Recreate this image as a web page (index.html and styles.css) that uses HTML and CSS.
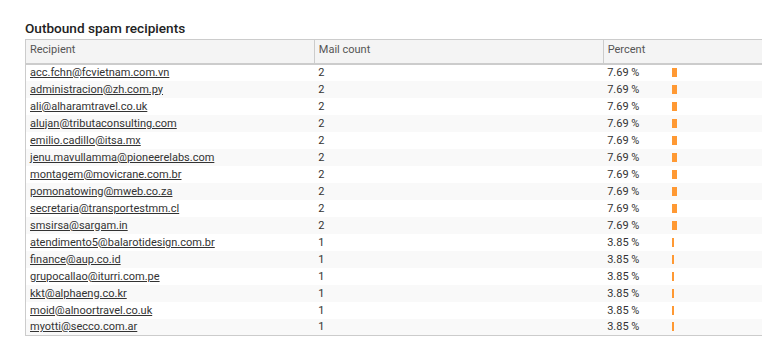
FILE: index.html
```html
<!DOCTYPE html>
<html>
<head>
<meta charset="utf-8">
<link rel="stylesheet" href="styles.css">
</head>
<body>
<div class="panel">
  <h2 class="title">Outbound spam recipients</h2>
  <div class="clip">
  <table class="report">
    <thead>
      <tr><th>Recipient</th><th>Mail count</th><th>Percent</th></tr>
    </thead>
    <tbody>
      <tr><td><a href="#">acc.fchn@fcvietnam.com.vn</a></td><td>2</td><td><span class="pct">7.69 %</span><span class="bar" style="width:5px"></span></td></tr>
      <tr><td><a href="#">administracion@zh.com.py</a></td><td>2</td><td><span class="pct">7.69 %</span><span class="bar" style="width:5px"></span></td></tr>
      <tr><td><a href="#">ali@alharamtravel.co.uk</a></td><td>2</td><td><span class="pct">7.69 %</span><span class="bar" style="width:5px"></span></td></tr>
      <tr><td><a href="#">alujan@tributaconsulting.com</a></td><td>2</td><td><span class="pct">7.69 %</span><span class="bar" style="width:5px"></span></td></tr>
      <tr><td><a href="#">emilio.cadillo@itsa.mx</a></td><td>2</td><td><span class="pct">7.69 %</span><span class="bar" style="width:5px"></span></td></tr>
      <tr><td><a href="#">jenu.mavullamma@pioneerelabs.com</a></td><td>2</td><td><span class="pct">7.69 %</span><span class="bar" style="width:5px"></span></td></tr>
      <tr><td><a href="#">montagem@movicrane.com.br</a></td><td>2</td><td><span class="pct">7.69 %</span><span class="bar" style="width:5px"></span></td></tr>
      <tr><td><a href="#">pomonatowing@mweb.co.za</a></td><td>2</td><td><span class="pct">7.69 %</span><span class="bar" style="width:5px"></span></td></tr>
      <tr><td><a href="#">secretaria@transportestmm.cl</a></td><td>2</td><td><span class="pct">7.69 %</span><span class="bar" style="width:5px"></span></td></tr>
      <tr><td><a href="#">smsirsa@sargam.in</a></td><td>2</td><td><span class="pct">7.69 %</span><span class="bar" style="width:5px"></span></td></tr>
      <tr><td><a href="#">atendimento5@balarotidesign.com.br</a></td><td>1</td><td><span class="pct">3.85 %</span><span class="bar" style="width:2px"></span></td></tr>
      <tr><td><a href="#">finance@aup.co.id</a></td><td>1</td><td><span class="pct">3.85 %</span><span class="bar" style="width:2px"></span></td></tr>
      <tr><td><a href="#">grupocallao@iturri.com.pe</a></td><td>1</td><td><span class="pct">3.85 %</span><span class="bar" style="width:2px"></span></td></tr>
      <tr><td><a href="#">kkt@alphaeng.co.kr</a></td><td>1</td><td><span class="pct">3.85 %</span><span class="bar" style="width:2px"></span></td></tr>
      <tr><td><a href="#">moid@alnoortravel.co.uk</a></td><td>1</td><td><span class="pct">3.85 %</span><span class="bar" style="width:2px"></span></td></tr>
      <tr><td><a href="#">myotti@secco.com.ar</a></td><td>1</td><td><span class="pct">3.85 %</span><span class="bar" style="width:2px"></span></td></tr>
    </tbody>
  </table>
  </div>
</div>
</body>
</html>
```
FILE: styles.css
```css
html, body {
  margin: 0;
  padding: 0;
  background: #fff;
  overflow: hidden;
}
body {
  font-family: "Roboto", "Liberation Sans", sans-serif;
  color: #333;
}
.panel {
  padding: 20px 0 0 25px;
}
.title {
  margin: 0 0 3px 0;
  font-size: 13.6px;
  font-weight: 500;
  line-height: 16px;
  color: #222;
}
.clip {
  width: 737px;
  overflow: hidden;
}
.report {
  border-collapse: collapse;
  width: 867px;
  table-layout: fixed;
  font-size: 11px;
  border: 1px solid #ccc;
  border-right: none;
}
.report th {
  box-sizing: border-box;
  background: #f4f4f4;
  font-weight: normal;
  text-align: left;
  color: #555;
  height: 24px;
  padding: 3px 4px 0;
  vertical-align: top;
  border-left: 1px solid #ccc;
  border-bottom: 2px solid #ccc;
  line-height: 14px;
}
.report td {
  box-sizing: border-box;
  height: 17px;
  padding: 0 4px;
  line-height: 15px;
  vertical-align: middle;
}
.report tbody tr:nth-child(even) td {
  background: #f9f9f9;
}
.report a {
  color: #333;
  text-decoration: underline;
}
.pct {
  display: inline-block;
  width: 65px;
  vertical-align: top;
}
.bar {
  display: inline-block;
  height: 9px;
  margin-top: 3px;
  background: #ff9933;
  vertical-align: top;
}
```
